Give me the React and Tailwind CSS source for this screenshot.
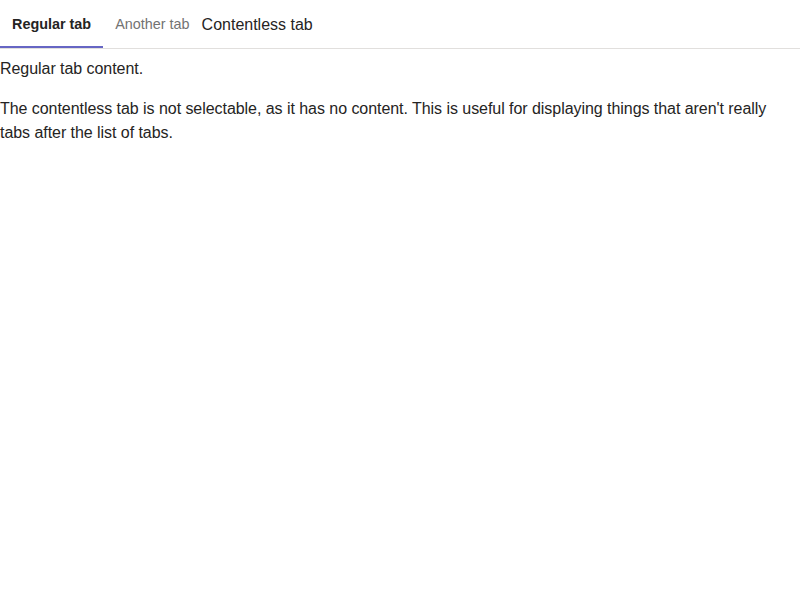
import React, { useState } from "react";

const tabs = [
  { id: "regular", label: "Regular tab", content: "Regular tab content." },
  { id: "another", label: "Another tab", content: "Another tab content." },
];

const App = () => {
  const [active, setActive] = useState("regular");
  const current = tabs.find((t) => t.id === active);

  return (
    <div className="min-h-screen bg-white text-[#252423]" style={{ fontFamily: "'Liberation Sans', Arial, sans-serif" }}>
      <div className="flex items-stretch h-[49px] border-b border-[#e1dfdd]">
        {tabs.map((tab) => (
          <button
            key={tab.id}
            onClick={() => setActive(tab.id)}
            className={
              tab.id === active
                ? "relative px-3 pt-0.5 text-[14.4px] font-bold text-[#252423]"
                : "relative px-3 pt-0.5 text-[14.4px] text-[#737373]"
            }
          >
            {tab.label}
            {tab.id === active && (
              <span className="absolute left-0 right-0 bottom-0 h-[2px] bg-[#6666c4]" />
            )}
          </button>
        ))}
        <div className="flex items-center pt-px text-base text-[#252423]">Contentless tab</div>
      </div>
      <div className="pt-[8px] text-base leading-6 tracking-[-0.05px]">
        <p>{current.content}</p>
        <p className="mt-4">
          The contentless tab is not selectable, as it has no content. This is useful for displaying things that aren't really tabs after the list of tabs.
        </p>
      </div>
    </div>
  );
};

export default App;
